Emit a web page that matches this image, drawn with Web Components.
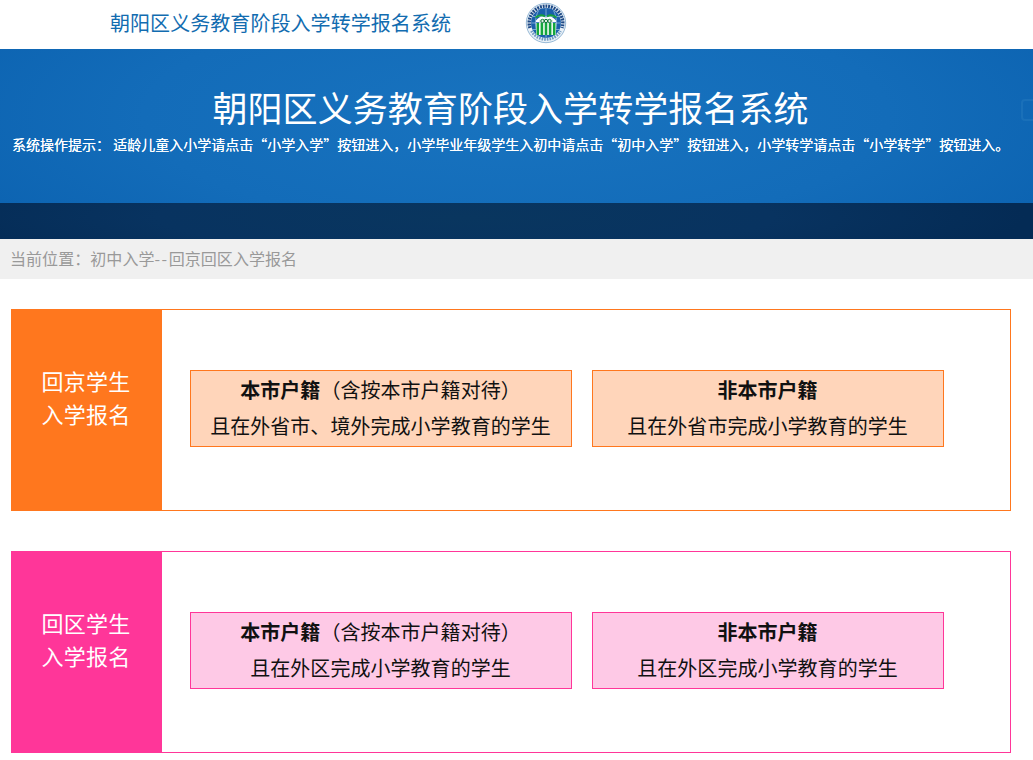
<!DOCTYPE html>
<html lang="zh-CN"><head><meta charset="utf-8"><title>朝阳区义务教育阶段入学转学报名系统</title>
<style>
html,body{margin:0;padding:0;background:#fff;font-family:"Liberation Sans","Noto Sans CJK SC",sans-serif}
body{width:1033px;height:760px;overflow:hidden}
</style></head><body>
<app-topbar>朝阳区义务教育阶段入学转学报名系统</app-topbar>
<app-banner heading="朝阳区义务教育阶段入学转学报名系统">系统操作提示：&nbsp;适龄儿童入小学请点击“小学入学”按钮进入，小学毕业年级学生入初中请点击“初中入学”按钮进入，小学转学请点击“小学转学”按钮进入。</app-banner>
<app-crumb>当前位置：初中入学<span style="letter-spacing:1.5px">--</span>回京回区入学报名</app-crumb>
<app-panel style="--c:#ff771e;--tint:#ffd5ba;margin-top:30px" l1="回京学生" l2="入学报名">
  <app-choice style="width:382px"><b>本市户籍</b><span>（含按本市户籍对待）</span><i slot="sub">且在外省市、境外完成小学教育的学生</i></app-choice>
  <app-choice style="width:352px"><b>非本市户籍</b><i slot="sub">且在外省市完成小学教育的学生</i></app-choice>
</app-panel>
<app-panel style="--c:#ff3699;--tint:#fec9e6;margin-top:40px" l1="回区学生" l2="入学报名">
  <app-choice style="width:382px"><b>本市户籍</b><span>（含按本市户籍对待）</span><i slot="sub">且在外区完成小学教育的学生</i></app-choice>
  <app-choice style="width:352px"><b>非本市户籍</b><i slot="sub">且在外区完成小学教育的学生</i></app-choice>
</app-panel>
<script>
const FONT='"Noto Sans CJK SC","Liberation Sans",sans-serif';
function def(name,html){customElements.define(name,class extends HTMLElement{
  connectedCallback(){if(this.shadowRoot)return;const r=this.attachShadow({mode:'open'});r.innerHTML=typeof html==='function'?html(this):html;}
});}
def('app-topbar',`<style>
:host{display:flex;align-items:center;height:49px;padding-left:110px;box-sizing:border-box;background:#fff;font:20px/24px ${FONT};color:#126cb0}
.t{width:415px;white-space:nowrap;margin-top:-4px;letter-spacing:.06px}
svg{display:block;width:42px;height:42px;margin-top:-4px}
</style><div class="t"><slot></slot></div>
<svg viewBox="0 0 42 42" aria-hidden="true">
<circle cx="21" cy="21" r="20" fill="#eaf1f7"/>
<circle cx="21" cy="21" r="19.700" fill="none" stroke="#8fb3d3" stroke-width=".9"/>
<path d="M5 26A16.800 16.800 0 1 1 37 26" fill="none" stroke="#1f4a86" stroke-width="3.400" stroke-dasharray="1.900 .9"/>
<path d="M6.500 29A16.800 16.800 0 0 0 35.500 29" fill="none" stroke="#6f9ac2" stroke-width="3" stroke-dasharray="1.600 1"/>
<circle cx="21" cy="21" r="15" fill="#1a60ab"/>
<path d="M7.500 14.500h27M6.200 21h29.600M7.500 27.500h27M21 6.200v29.600M13.500 8.500c-4 8-4 17 0 25M28.500 8.500c4 8 4 17 0 25" fill="none" stroke="#a9c8e4" stroke-width=".7"/>
<path d="M11 18.500q5-6 10-3q5-3 10 3v1.500H11z" fill="#fff"/>
<path d="M10.500 15.500q5-4 9.500-1M31.500 15.500q-5-4-9.500-1" fill="none" stroke="#16a03c" stroke-width="1.800"/>
<path d="M14 17.800h14v3H14z" fill="#dfe9e2"/>
<circle cx="17.500" cy="19" r="1.700" fill="none" stroke="#0e7a35" stroke-width="1"/><circle cx="21" cy="19" r="1.700" fill="none" stroke="#0e7a35" stroke-width="1"/><circle cx="24.500" cy="19" r="1.700" fill="none" stroke="#0e7a35" stroke-width="1"/>
<path d="M11 21h20v12H11z" fill="#fff"/>
<path d="M11.500 21h2.600v12h-2.600zM15.600 21h2.600v12h-2.600zM19.700 21h2.600v12h-2.600zM23.800 21h2.600v12h-2.600zM27.900 21h2.600v12h-2.600z" fill="#14a63c"/>
</svg>`);
def('app-banner',`<style>
:host{display:flex;flex-direction:column;height:190px;background:radial-gradient(ellipse 620px 190px at 50% 35%,#1873bf 0%,#136cb9 60%,#0c63b1 100%);color:#fff;font-family:${FONT}}
.top{flex:1;display:flex;flex-direction:column;align-items:center;position:relative}
h1{margin:34px 0 0;font-size:35px;line-height:48px;font-weight:400;white-space:nowrap;transform:translateX(-6px);letter-spacing:.06px}
p{margin:3px 0 0;font-size:14px;line-height:20px;font-weight:400;white-space:nowrap;width:100%;padding-left:12px;box-sizing:border-box;text-shadow:0 0 .4px #fff}
.strip{height:36px;background:radial-gradient(ellipse 560px 60px at 45% 40%,#09365f 0%,#083360 55%,#042b55 100%)}
.ghost{position:absolute;left:1021px;top:50px;width:24px;height:18px;border:2px solid #1a70b9;border-radius:4px}
</style><div class="top"><h1></h1><p><slot></slot></p><div class="ghost"></div></div><div class="strip"></div>`);
customElements.whenDefined('app-banner').then(()=>{const b=document.querySelector('app-banner');b.shadowRoot.querySelector('h1').textContent=b.getAttribute('heading');});
def('app-crumb',`<style>
:host{display:block;height:40px;background:#f0f0f0;color:#999;font:16px/38px ${FONT};padding-left:10px;white-space:nowrap;letter-spacing:.06px}
</style><slot></slot>`);
def('app-panel',h=>`<style>
:host{display:flex;box-sizing:border-box;width:1000px;height:202px;margin-left:11px;border:1px solid var(--c);background:#fff;font-family:${FONT}}
.side{width:150px;margin:-1px 0 -1px -1px;padding:0 1px 26px 0;background:var(--c);color:#fff;font-size:22px;line-height:33px;letter-spacing:.2px;display:flex;flex-direction:column;align-items:center;justify-content:center;white-space:nowrap;height:176px}
.body{flex:1;display:flex;align-items:flex-start;gap:20px;padding:60px 0 0 28px}
</style><div class="side"><div>${h.getAttribute('l1')}</div><div>${h.getAttribute('l2')}</div></div><div class="body"><slot></slot></div>`);
def('app-choice',`<style>
:host{display:block;box-sizing:border-box;height:77px;border:1px solid var(--c);background:var(--tint);color:#111;font-size:20px;text-align:center;white-space:nowrap;letter-spacing:.04px;padding:1px 1px 0 0}
.a,.b{line-height:36px;height:36px}
::slotted(b){font-weight:700}
::slotted(span){font-weight:400}
::slotted(i){font-style:normal}
</style><div class="a"><slot></slot></div><div class="b"><slot name="sub"></slot></div>`);
</script>
</body></html>
